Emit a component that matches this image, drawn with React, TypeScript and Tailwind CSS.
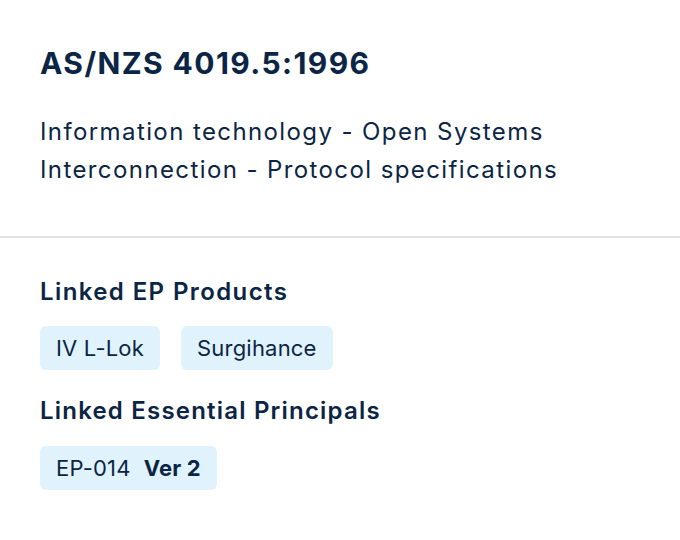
export default function App() {
  return (
    <div className="min-h-screen bg-white text-[#0b2545]">
      <div className="font-['Inter',sans-serif]">
        <div className="px-10 pt-[42px] pb-[47px]">
          <h1 className="text-[30px] font-bold leading-[42px] tracking-[1.4px]">AS/NZS 4019.5:1996</h1>
          <p className="mt-[29px] text-[24px] leading-[38px] tracking-[1.4px]">
            Information technology - Open Systems
            <br />
            Interconnection - Protocol specifications
          </p>
        </div>
        <div className="h-[2px] bg-[#e3e3e3]" />
        <div className="px-10 pt-[38px]">
          <h2 className="text-[24px] font-semibold leading-[32px] tracking-[1.4px]">Linked EP Products</h2>
          <div className="mt-[18px] flex gap-[21px]">
            <span className="rounded-md bg-[#e0f3fc] px-4 h-[44px] flex items-center text-[22px] tracking-[0.2px]">IV L-Lok</span>
            <span className="rounded-md bg-[#e0f3fc] px-4 h-[44px] flex items-center text-[22px] tracking-[0.2px]">Surgihance</span>
          </div>
          <h2 className="mt-[25px] text-[24px] font-semibold leading-[32px] tracking-[1.2px]">Linked Essential Principals</h2>
          <div className="mt-[19px] flex">
            <span className="rounded-md bg-[#e0f3fc] px-4 h-[44px] flex items-center gap-[13px] text-[22px] tracking-[0.2px]">
              EP-014 <b className="font-bold">Ver 2</b>
            </span>
          </div>
        </div>
      </div>
    </div>
  );
}
